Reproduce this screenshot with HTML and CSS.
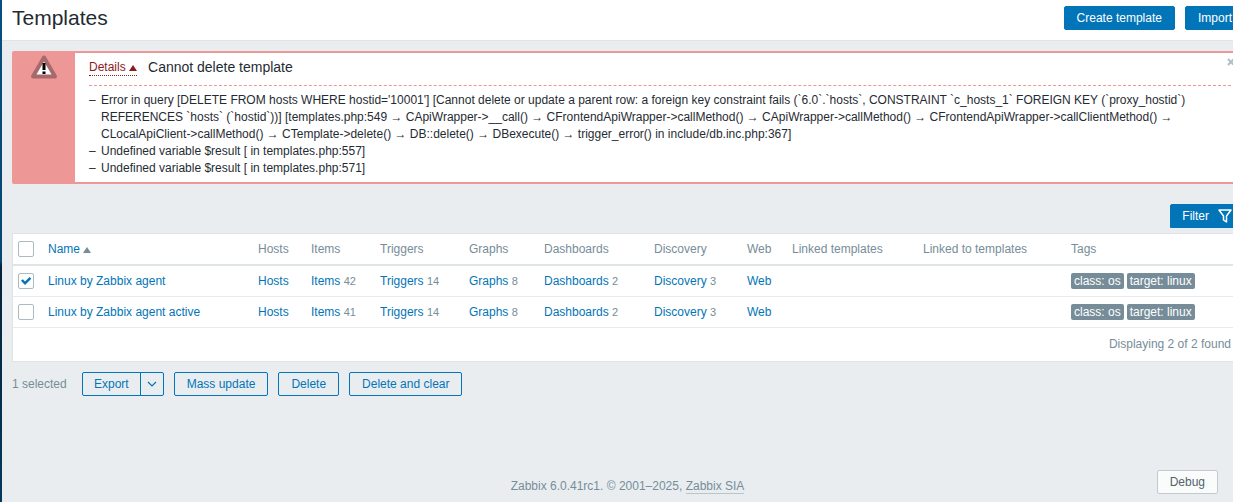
FILE: index.html
```
<!DOCTYPE html>
<html lang="en">

  <head>
    <meta charset="UTF-8">
    <meta name="viewport" content="width=device-width, initial-scale=1.0">
    <title>Templates</title>
    <link rel="stylesheet" href="styles.css">
  </head>

  <body>
    <div class="wrapper">
      <header class="header-title">
        <h1>Templates</h1>
        <div class="header-controls">
          <button type="button">Create template</button>
          <button type="button">Import</button>
        </div>
      </header>

      <main>
        <section class="msg-bad">
          <div class="msg-icon">
            <svg width="28" height="26" viewBox="0 0 28 26">
              <path d="M14 3.500 L25 22.500 H3 Z" fill="#fff" stroke="#a76a6c" stroke-width="4" stroke-linejoin="round" />
              <path d="M12.500 9 h3 v7 h-3 z M12.500 17.500 h3 v2.500 h-3 z" fill="#000" />
            </svg>
          </div>
          <div class="msg-body">
            <div class="msg-head">
              <a class="link-action" href="#details">Details <span class="arrow-up"></span></a>
              <span class="msg-title">Cannot delete template</span>
            </div>
            <ul id="details" class="msg-details">
              <li>Error in query [DELETE FROM hosts WHERE hostid='10001'] [Cannot delete or update a parent row: a foreign key constraint fails (`6.0`.`hosts`, CONSTRAINT `c_hosts_1` FOREIGN KEY (`proxy_hostid`) REFERENCES `hosts` (`hostid`))] [templates.php:549 → CApiWrapper->__call() → CFrontendApiWrapper->callMethod() → CApiWrapper->callMethod() → CFrontendApiWrapper->callClientMethod() → CLocalApiClient->callMethod() → CTemplate->delete() → DB::delete() → DBexecute() → trigger_error() in include/db.inc.php:367]</li>
              <li>Undefined variable $result [ in templates.php:557]</li>
              <li>Undefined variable $result [ in templates.php:571]</li>
            </ul>
          </div>
          <button type="button" class="btn-close" aria-label="Close">
            <svg width="8" height="8" viewBox="0 0 8 8">
              <path d="M1 1 L7 7 M7 1 L1 7" stroke="#b0bec5" stroke-width="2" />
            </svg>
          </button>
        </section>

        <div class="filter-bar">
          <button type="button" class="btn-filter">Filter
            <svg width="16" height="16" viewBox="0 0 16 16">
              <path d="M2 2 H14 L9.500 8 V14 L6.500 12 V8 Z" fill="none" stroke="#fff" stroke-width="1.500" stroke-linejoin="round" />
            </svg>
          </button>
        </div>

        <form>
          <table class="list-table">
            <colgroup>
              <col class="col-check">
              <col class="col-name">
              <col class="col-hosts">
              <col class="col-items">
              <col class="col-triggers">
              <col class="col-graphs">
              <col class="col-dashboards">
              <col class="col-discovery">
              <col class="col-web">
              <col class="col-linked">
              <col class="col-linked-to">
              <col>
            </colgroup>
            <thead>
              <tr>
                <th><input type="checkbox" aria-label="Select all"></th>
                <th><a href="#name">Name <span class="arrow-up"></span></a></th>
                <th>Hosts</th>
                <th>Items</th>
                <th>Triggers</th>
                <th>Graphs</th>
                <th>Dashboards</th>
                <th>Discovery</th>
                <th>Web</th>
                <th>Linked templates</th>
                <th>Linked to templates</th>
                <th>Tags</th>
              </tr>
            </thead>
            <tbody>
              <tr>
                <td><input type="checkbox" aria-label="Linux by Zabbix agent" checked></td>
                <td><a href="#t1">Linux by Zabbix agent</a></td>
                <td><a href="#hosts">Hosts</a></td>
                <td><a href="#items">Items</a> <sup>42</sup></td>
                <td><a href="#triggers">Triggers</a> <sup>14</sup></td>
                <td><a href="#graphs">Graphs</a> <sup>8</sup></td>
                <td><a href="#dashboards">Dashboards</a> <sup>2</sup></td>
                <td><a href="#discovery">Discovery</a> <sup>3</sup></td>
                <td><a href="#web">Web</a></td>
                <td></td>
                <td></td>
                <td><div class="tags"><span class="tag">class: os</span><span class="tag">target: linux</span></div></td>
              </tr>
              <tr>
                <td><input type="checkbox" aria-label="Linux by Zabbix agent active"></td>
                <td><a href="#t2">Linux by Zabbix agent active</a></td>
                <td><a href="#hosts">Hosts</a></td>
                <td><a href="#items">Items</a> <sup>41</sup></td>
                <td><a href="#triggers">Triggers</a> <sup>14</sup></td>
                <td><a href="#graphs">Graphs</a> <sup>8</sup></td>
                <td><a href="#dashboards">Dashboards</a> <sup>2</sup></td>
                <td><a href="#discovery">Discovery</a> <sup>3</sup></td>
                <td><a href="#web">Web</a></td>
                <td></td>
                <td></td>
                <td><div class="tags"><span class="tag">class: os</span><span class="tag">target: linux</span></div></td>
              </tr>
            </tbody>
          </table>
          <div class="table-paging">Displaying 2 of 2 found</div>

          <div class="action-buttons">
            <span class="selected-count">1 selected</span>
            <div class="btn-split">
              <button type="button" class="btn-alt">Export</button>
              <button type="button" class="btn-alt btn-toggle" aria-label="Export formats">
                <svg width="10" height="8" viewBox="0 0 10 8">
                  <path d="M1 2 L5 6 L9 2" fill="none" stroke="#0275b8" stroke-width="1.200" />
                </svg>
              </button>
            </div>
            <button type="button" class="btn-alt">Mass update</button>
            <button type="button" class="btn-alt">Delete</button>
            <button type="button" class="btn-alt">Delete and clear</button>
          </div>
        </form>
      </main>

      <footer>Zabbix 6.0.41rc1. © 2001–2025, <a href="#zabbix">Zabbix SIA</a></footer>
    </div>

    <button type="button" class="btn-debug">Debug</button>
  </body>

</html>
```
FILE: styles.css
```
* {
  box-sizing: border-box;
}

body {
  margin: 0;
  min-height: 100vh;
  overflow: hidden;
  border-left: 2px solid #0a3d62;
  border-image: linear-gradient(#07507f, #064672 52%, #04223a 53%, #06395d) 1;
  background-color: #e9edf0;
  color: #1f2c33;
  font-family: Arial, "Liberation Sans", sans-serif;
  font-size: 12px;
  line-height: 17px;
}

/* Content is a little wider than the window and runs off to the right */
.wrapper {
  display: flex;
  flex-direction: column;
  width: calc(100% + 20px);
  min-height: 100vh;
}

a {
  color: #0275b8;
  text-decoration: none;
}

button {
  height: 24px;
  padding: 0 11px;
  border: 1px solid #0275b8;
  border-radius: 2px;
  background-color: #0275b8;
  color: #fff;
  font-family: inherit;
  font-size: 12px;
  white-space: nowrap;
  cursor: pointer;
}

/* Header */
.header-title {
  display: flex;
  justify-content: space-between;
  align-items: center;
  height: 41px;
  padding: 0 8px 5px 10px;
  border-bottom: 1px solid #dfe4e7;
  background-color: #fff;
}

h1 {
  margin: 0;
  font-size: 21px;
  font-weight: normal;
  line-height: 24px;
}

.header-controls {
  display: flex;
  gap: 10px;
}

.header-controls button {
  padding: 0 12px;
}

main {
  padding: 10px 10px 0;
}

/* Error message */
.msg-bad {
  position: relative;
  display: flex;
  border: 2px solid #ed9797;
  border-right-width: 1px;
  border-radius: 2px;
  background-color: #fff;
}

.msg-icon {
  width: 61px;
  flex-shrink: 0;
  padding: 1px 2px 0 0;
  background-color: #ed9797;
  text-align: center;
}

.msg-body {
  flex: 1;
  padding: 5px 11px 5px 14px;
}

.msg-head {
  display: flex;
  align-items: center;
  gap: 11px;
  padding-bottom: 8px;
  border-bottom: 1px dashed #ed9797;
}

.msg-title {
  font-size: 14px;
  line-height: 19px;
}

.link-action {
  border-bottom: 1px dotted #8b1a1f;
  color: #8b1a1f;
  line-height: 15px;
}

.arrow-up {
  display: inline-block;
  border: 4px solid transparent;
  border-top-width: 0;
  border-bottom: 6px solid currentColor;
}

.msg-details {
  margin: 0;
  padding: 6px 0 0;
  list-style: none;
}

.msg-details li {
  padding-left: 12px;
  text-indent: -12px;
}

.msg-details li::before {
  content: "–";
  display: inline-block;
  width: 12px;
  text-indent: 0;
}

.btn-close {
  position: absolute;
  top: 5px;
  right: 7px;
  display: flex;
  height: 8px;
  padding: 0;
  border: 0;
  background: none;
}

/* Filter */
.filter-bar {
  display: flex;
  justify-content: flex-end;
  padding: 20px 0 5px;
}

.btn-filter {
  display: flex;
  align-items: center;
  gap: 8px;
  padding: 0 9px 0 11px;
  border-radius: 2px 2px 0 0;
}

/* Templates list */
.list-table {
  width: 100%;
  border: 1px solid #dfe4e7;
  border-bottom: 0;
  border-spacing: 0;
  background-color: #fff;
  table-layout: fixed;
}

.col-check { width: 30px; }
.col-name { width: 210px; }
.col-hosts { width: 53px; }
.col-items { width: 69px; }
.col-triggers { width: 89px; }
.col-graphs { width: 75px; }
.col-dashboards { width: 110px; }
.col-discovery { width: 93px; }
.col-web { width: 45px; }
.col-linked { width: 131px; }
.col-linked-to { width: 148px; }

th,
td {
  height: 31px;
  padding: 0 5px;
  border-bottom: 1px solid #e8ebed;
  text-align: left;
  vertical-align: middle;
  white-space: nowrap;
}

th {
  height: 32px;
  border-bottom: 2px solid #dfe4e7;
  color: #768d99;
  font-weight: normal;
}

th .arrow-up {
  color: #768d99;
}

sup {
  color: #768d99;
  font-size: 11px;
  line-height: 12px;
  vertical-align: baseline;
}

input[type="checkbox"] {
  display: block;
  width: 16px;
  height: 16px;
  margin: 0;
  border: 1px solid #acbbc2;
  border-radius: 2px;
  background-color: #fff;
  appearance: none;
}

input[type="checkbox"]:checked::before {
  content: "";
  display: block;
  height: 14px;
  background-color: #0275b8;
  clip-path: polygon(14% 48%, 28% 38%, 43% 53%, 75% 22%, 88% 34%, 43% 79%);
}

.tags {
  display: flex;
  gap: 3px;
}

.tag {
  padding: 0 3px;
  border-radius: 2px;
  background-color: #768d99;
  color: #fff;
  line-height: 16px;
}

.table-paging {
  padding: 8px 11px;
  border: 1px solid #dfe4e7;
  border-top: 0;
  background-color: #fff;
  color: #768d99;
  text-align: right;
}

/* Actions under the list */
.action-buttons {
  display: flex;
  align-items: center;
  gap: 10px;
  padding-top: 10px;
}

.selected-count {
  min-width: 60px;
  color: #768d99;
}

.btn-alt {
  padding: 0 12px;
  background-color: transparent;
  color: #0275b8;
}

.btn-split {
  display: flex;
}

.btn-split .btn-alt:first-child {
  padding: 0 11px;
  border-radius: 2px 0 0 2px;
}

.btn-split .btn-toggle {
  width: 24px;
  margin-left: -1px;
  padding: 0 6px;
  border-radius: 0 2px 2px 0;
}

footer {
  margin-top: auto;
  padding-bottom: 7px;
  color: #768d99;
  text-align: center;
}

footer a {
  border-bottom: 1px solid #b8c6cc;
  color: #768d99;
}

.btn-debug {
  position: fixed;
  right: 15px;
  bottom: 8px;
  padding: 0 12px;
  border-color: #c0cbd0;
  background-color: #fafcfc;
  color: #52636c;
}
```
